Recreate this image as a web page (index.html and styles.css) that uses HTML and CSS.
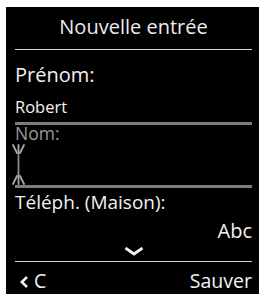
FILE: index.html
```html
<!DOCTYPE html>
<html lang="fr">
<head>
<meta charset="utf-8">
<title>Nouvelle entrée</title>
<link rel="stylesheet" href="styles.css">
</head>
<body>
<div class="screen">
  <div class="title">Nouvelle entrée</div>
  <div class="label first">Prénom:</div>
  <div class="value">Robert</div>
  <div class="underline"></div>
  <div class="label dim">Nom:</div>
  <div class="cursor-area">
    <svg class="cursor" width="14" height="41" viewBox="0 0 14 41">
      <g stroke="#a8a8a8" stroke-width="1.8" fill="none" stroke-linecap="round">
        <line x1="6.5" y1="1" x2="6.5" y2="10"/>
        <line x1="1" y1="1" x2="5" y2="9"/>
        <line x1="12" y1="1" x2="8" y2="9"/>
        <line x1="6.5" y1="12" x2="6.5" y2="30" stroke="#8a8a8a"/>
        <line x1="6.5" y1="31" x2="6.5" y2="40"/>
        <line x1="5" y1="32" x2="1" y2="40"/>
        <line x1="8" y1="32" x2="12" y2="40"/>
      </g>
    </svg>
  </div>
  <div class="underline"></div>
  <div class="label tel">Téléph. (Maison):</div>
  <div class="mode">Abc</div>
  <div class="more">
    <svg width="20" height="9" viewBox="0 0 20 9"><polyline points="1.5,1 10,7 18.5,1" fill="none" stroke="#f2f2f2" stroke-width="2.8"/></svg>
  </div>
  <div class="softkeys">
    <div class="back">
      <svg width="8" height="12" viewBox="0 0 8 12"><polyline points="7,1 1.8,6 7,11" fill="none" stroke="#f2f2f2" stroke-width="2.5"/></svg>
      <span>C</span>
    </div>
    <div class="save">Sauver</div>
  </div>
</div>
</body>
</html>
```

FILE: styles.css
```css
html, body {
  margin: 0;
  background: #fff;
}
body {
  font-family: "Open Sans", "DejaVu Sans", sans-serif;
}
.screen {
  margin: 7px 0 0 6px;
  width: 253px;
  height: 287px;
  box-sizing: border-box;
  padding: 0 7px 0 9px;
  background: #000;
  color: #f2f2f2;
  display: flex;
  flex-direction: column;
}
.title {
  height: 43px;
  box-sizing: border-box;
  padding-top: 6px;
  border-bottom: 1px solid #d8d8d8;
  text-align: center;
  font-size: 20px;
  line-height: 27px;
  color: #ececec;
}
.label {
  font-size: 20px;
  line-height: 27px;
}
.label.first {
  margin-top: 11px;
}
.value {
  margin-top: 8px;
  font-size: 16.5px;
  line-height: 22px;
}
.underline {
  margin-top: 4px;
  height: 3px;
  background: #7c7c7c;
}
.label.dim {
  margin-top: 0;
  font-size: 17.5px;
  line-height: 17px;
  color: #9a9a9a;
}
.cursor-area {
  height: 43px;
  display: flex;
  align-items: flex-end;
}
.cursor-area + .underline {
  margin-top: 0;
}
.cursor {
  display: block;
  margin-left: -3px;
}
.label.tel {
  margin-top: 4px;
  font-size: 19px;
  line-height: 20px;
}
.mode {
  margin-top: 8px;
  text-align: right;
  font-size: 20px;
  line-height: 22px;
}
.more {
  margin-top: 5px;
  height: 9px;
  display: flex;
  justify-content: center;
}
.more svg {
  display: block;
}
.softkeys {
  margin-top: 5px;
  border-top: 1px solid #d0d0d0;
  padding-top: 8px;
  display: flex;
  justify-content: space-between;
  align-items: center;
  font-size: 19.5px;
  line-height: 22px;
}
.back {
  display: flex;
  align-items: center;
  gap: 6px;
  padding-left: 5px;
}
.back svg {
  display: block;
  margin-top: 2px;
}
```
